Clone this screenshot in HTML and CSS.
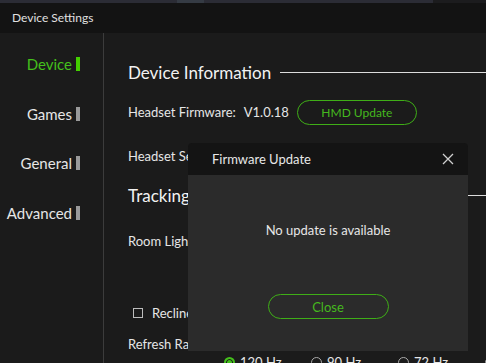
FILE: index.html
```html
<!DOCTYPE html>
<html>
<head>
<meta charset="utf-8">
<link rel="stylesheet" href="styles.css">
</head>
<body>
<div class="app">
  <div class="topstrip"><span class="tab"></span><span class="rest"></span></div>
  <div class="titlebar">Device Settings</div>
  <div class="main">
    <nav class="sidebar">
      <div class="nav-item active">Device<span class="mark"></span></div>
      <div class="nav-item">Games<span class="mark"></span></div>
      <div class="nav-item">General<span class="mark"></span></div>
      <div class="nav-item">Advanced<span class="mark"></span></div>
    </nav>
    <section class="content">
      <h2 class="heading">Device Information<span class="rule"></span></h2>
      <div class="row fw">Headset Firmware:<span class="ver">V1.0.18</span><button class="pill hmd">HMD Update</button></div>
      <div class="row hs">Headset Serial Number:</div>
      <h2 class="heading track">Tracking<span class="rule"></span></h2>
      <div class="row room">Room Lighting</div>
      <div class="row recline"><span class="check"></span>Recline Mode</div>
      <div class="row refresh">Refresh Rate</div>
      <div class="radios">
        <span class="radio on"></span><span class="rlabel">120 Hz</span>
        <span class="radio"></span><span class="rlabel">90 Hz</span>
        <span class="radio"></span><span class="rlabel">72 Hz</span>
        <span class="radio"></span><span class="rlabel">60 Hz</span>
      </div>
    </section>
  </div>
  <div class="modal">
    <div class="modal-head">
      <span>Firmware Update</span>
      <svg class="x" width="12" height="12" viewBox="0 0 12 12"><path d="M1 1L11 11M11 1L1 11" stroke="#d0d0d0" stroke-width="1.3" fill="none"/></svg>
    </div>
    <div class="modal-body">
      <p class="msg">No update is available</p>
      <button class="pill close">Close</button>
    </div>
  </div>
</div>
</body>
</html>
```
FILE: styles.css
```css
* { box-sizing: border-box; margin: 0; padding: 0; }
html, body { width: 486px; height: 363px; overflow: hidden; background: #1b1b1b; }
body { font-family: "Source Sans Pro", Lato, "Noto Sans", sans-serif; color: #e6e6e6; }
.app { position: relative; width: 486px; height: 363px; overflow: hidden; }
.topstrip { height: 3px; display: flex; background: #2b2c35; }
.topstrip .tab { margin-left: 177px; width: 27px; background: #353b44; }
.topstrip .rest { margin-left: auto; width: 53px; background: #1c1c1e; }
.titlebar { height: 30px; background: #131313; font-size: 12px; line-height: 30px; padding-left: 12px; color: #e0e0e0; }
.main { display: flex; height: 330px; }
.sidebar { flex: 0 0 104px; width: 104px; border-right: 1px solid #3c3c3c; padding-top: 21px; display: flex; flex-direction: column; gap: 29.5px; }
.nav-item { display: flex; justify-content: flex-end; align-items: center; gap: 4px; padding-right: 23px; font-size: 15px; height: 20px; color: #e6e6e6; white-space: nowrap; }
.nav-item .mark { width: 4px; height: 14px; background: #9a9a9a; }
.nav-item.active { color: #44c01c; }
.nav-item.active .mark { background: #44d000; }
.content { flex: 1; min-width: 0; padding-left: 24px; white-space: nowrap; }
.heading { display: flex; align-items: center; font-weight: normal; font-size: 17px; color: #f2f2f2; height: 24px; margin-top: 27px; }
.heading .rule { flex: 1; height: 1px; background: #dcdcdc; margin-left: 9px; }
.row { font-size: 13px; height: 18px; display: flex; align-items: center; color: #e6e6e6; }
.fw { margin-top: 15px; height: 26px; }
.ver { margin-left: 8px; }
.pill { background: transparent; border: 1.5px solid #3fae17; color: #45b81e; font-family: inherit; border-radius: 13px; }
.hmd { margin-left: 8px; width: 120px; height: 25px; font-size: 12px; }
.hs { margin-top: 22px; }
.track { margin-top: 18px; }
.room { margin-top: 25px; }
.recline { margin-top: 54px; }
.check { width: 10px; height: 10px; border: 1px solid #bdbdbd; margin: 0 9px 0 5px; }
.refresh { margin-top: 13px; }
.radios { display: flex; align-items: center; margin-top: 1px; padding-left: 96px; font-size: 13px; }
.radio { flex: 0 0 11px; width: 11px; height: 11px; border-radius: 50%; border: 1px solid #aaa; margin-right: 5px; }
.radio.on { border: 2px solid #44c01c; background: #44c01c; box-shadow: inset 0 0 0 1px #1b1b1b; }
.rlabel { flex: 0 0 71px; width: 71px; }
.modal { position: absolute; left: 188px; top: 143px; width: 280px; height: 208px; display: flex; flex-direction: column; }
.modal-head { height: 32px; background: #141414; border-radius: 4px 4px 0 0; display: flex; align-items: center; justify-content: space-between; padding: 0 14px 0 24px; font-size: 13px; color: #e8e8e8; }
.modal-body { flex: 1; background: #2b2b2b; display: flex; flex-direction: column; align-items: center; }
.msg { font-size: 13px; margin-top: 47px; color: #e6e6e6; }
.close { width: 121px; height: 25px; margin-top: 56px; font-size: 13px; }
```
